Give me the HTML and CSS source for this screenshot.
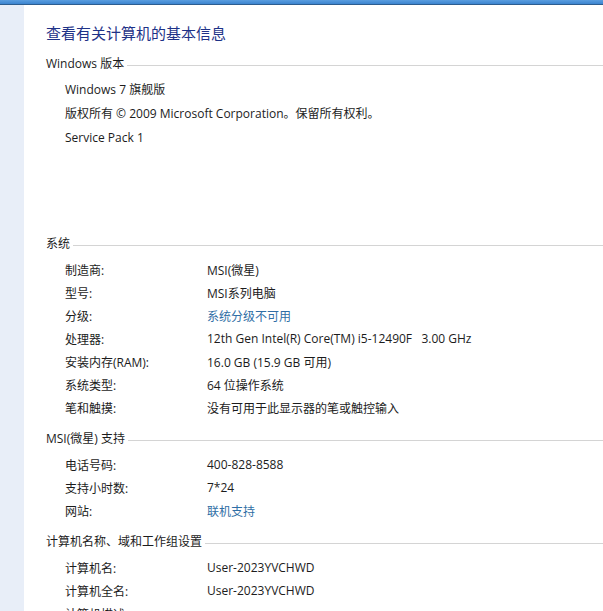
FILE: index.html
```html
<!DOCTYPE html>
<html lang="zh-CN">
<head>
    <meta charset="UTF-8">
    <meta name="viewport" content="width=device-width, initial-scale=1.0">
    <title>系统</title>
    <link rel="stylesheet" href="styles.css">
</head>
<body>
    <div class="topbar"></div>
    <div class="window">
        <aside class="side"></aside>

        <main class="main">
            <h1 class="title">查看有关计算机的基本信息</h1>

            <section class="group group-win">
                <h2 class="group-title">Windows 版本</h2>
                <p class="row-single">Windows 7 旗舰版</p>
                <p class="row-single">版权所有 © 2009 Microsoft Corporation。保留所有权利。</p>
                <p class="row-single">Service Pack 1</p>
            </section>

            <section class="group">
                <h2 class="group-title">系统</h2>
                <dl class="rows">
                    <dt>制造商:</dt><dd>MSI(微星)</dd>
                    <dt>型号:</dt><dd>MSI系列电脑</dd>
                    <dt>分级:</dt><dd><a href="#">系统分级不可用</a></dd>
                    <dt>处理器:</dt><dd>12th Gen Intel(R) Core(TM) i5-12490F&nbsp;&nbsp;&nbsp;3.00 GHz</dd>
                    <dt>安装内存(RAM):</dt><dd>16.0 GB (15.9 GB 可用)</dd>
                    <dt>系统类型:</dt><dd>64 位操作系统</dd>
                    <dt>笔和触摸:</dt><dd>没有可用于此显示器的笔或触控输入</dd>
                </dl>
            </section>

            <section class="group">
                <h2 class="group-title">MSI(微星) 支持</h2>
                <dl class="rows">
                    <dt>电话号码:</dt><dd>400-828-8588</dd>
                    <dt>支持小时数:</dt><dd>7*24</dd>
                    <dt>网站:</dt><dd><a href="#">联机支持</a></dd>
                </dl>
            </section>

            <section class="group">
                <h2 class="group-title">计算机名称、域和工作组设置</h2>
                <dl class="rows">
                    <dt>计算机名:</dt><dd>User-2023YVCHWD</dd>
                    <dt>计算机全名:</dt><dd>User-2023YVCHWD</dd>
                    <dt>计算机描述:</dt><dd></dd>
                </dl>
            </section>
        </main>
    </div>
</body>
</html>
```

FILE: styles.css
```css
html{
    box-sizing: border-box;
    font-family: "Open Sans", "Noto Sans CJK SC", sans-serif;
    font-size: 12px;
}

*,
*:after,
*:before{
    box-sizing: inherit;
}

body{
    margin: 0;
    background-color: #fff;
    color: #1c1c1c;
    overflow: hidden;
}

a{
    color: #2f6ea5;
    text-decoration: none;
}

.topbar{
    height: 5px;
    background: linear-gradient(#5a9ee0, #3b84cf);
    border-bottom: 1px solid #2c5d8f;
}

.window{
    display: flex;
    min-height: 606px;
}

.side{
    width: 24px;
    flex-shrink: 0;
    background-color: #e8eef8;
}

.main{
    flex: 1;
    padding-left: 22px;
}

.title{
    margin: 18px 0 0;
    font-size: 15px;
    line-height: 20px;
    font-weight: normal;
    color: #1e3287;
}

.group{
    margin-top: 10px;
}

.group-win{
    margin-top: 11px;
    min-height: 170px;
}

.group-title{
    display: flex;
    align-items: center;
    margin: 0 0 4px;
    font-size: 12px;
    line-height: 20px;
    font-weight: normal;
}

.group-title::after{
    content: "";
    flex: 1;
    margin-left: 3px;
    margin-top: 3px;
    border-top: 1px solid #d4d4d4;
}

.row-single{
    margin: 0;
    padding-left: 19px;
    line-height: 24px;
}

.rows{
    display: grid;
    grid-template-columns: 142px 1fr;
    grid-auto-rows: 23px;
    align-items: center;
    margin: 0;
    padding-left: 19px;
}

.rows dt,
.rows dd{
    margin: 0;
    white-space: nowrap;
}
```
